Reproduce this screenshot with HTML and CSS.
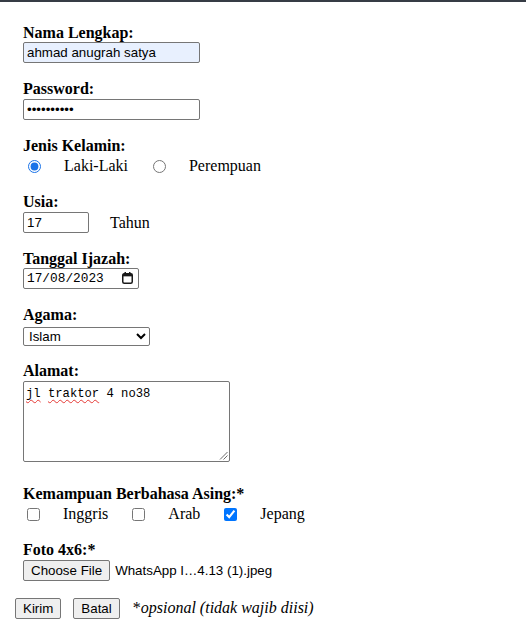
FILE: index.html
```html
<!DOCTYPE html>
<html lang="id">
<head>
<meta charset="utf-8">
<title>Formulir Pendaftaran</title>
<link rel="stylesheet" href="styles.css">
</head>
<body>
<div class="topbar"></div>
<form class="form">
  <div class="field">
    <label class="field-label" for="nama">Nama Lengkap:</label>
    <div class="control-row">
      <input class="text-input name-input" id="nama" type="text" value="ahmad anugrah satya">
    </div>
  </div>

  <div class="field">
    <label class="field-label" for="password">Password:</label>
    <div class="control-row">
      <input class="text-input name-input-plain" id="password" type="password" value="ahmadsatya">
    </div>
  </div>

  <div class="field">
    <span class="field-label">Jenis Kelamin:</span>
    <div class="control-row">
      <label class="opt"><input class="radio" type="radio" name="jk" checked><span>Laki-Laki</span></label>
      <label class="opt"><input class="radio" type="radio" name="jk"><span>Perempuan</span></label>
    </div>
  </div>

  <div class="field">
    <label class="field-label" for="usia">Usia:</label>
    <div class="control-row">
      <input class="text-input age-input" id="usia" type="text" value="17">
      <span class="unit">Tahun</span>
    </div>
  </div>

  <div class="field">
    <span class="field-label">Tanggal Ijazah:</span>
    <div class="control-row">
      <div class="date-input">
        <span class="date-text">17/08/2023</span>
        <svg class="cal-icon" width="11" height="12" viewBox="0 0 11 12" aria-hidden="true">
          <rect x="2.5" y="0" width="1.5" height="2" fill="#1a1a1a"/>
          <rect x="7" y="0" width="1.5" height="2" fill="#1a1a1a"/>
          <rect x="0.75" y="1.75" width="9.5" height="9.5" rx="1.5" fill="none" stroke="#1a1a1a" stroke-width="1.5"/>
          <rect x="0.75" y="1.75" width="9.5" height="2.6" fill="#1a1a1a"/>
        </svg>
      </div>
    </div>
  </div>

  <div class="field">
    <label class="field-label" for="agama">Agama:</label>
    <div class="control-row">
      <select class="select" id="agama">
        <option selected>Islam</option>
        <option>Kristen</option>
        <option>Katolik</option>
        <option>Hindu</option>
        <option>Buddha</option>
        <option>Konghucu</option>
      </select>
    </div>
  </div>

  <div class="field">
    <span class="field-label">Alamat:</span>
    <div class="control-row area-row">
      <div class="textarea" role="textbox" aria-multiline="true"><span class="typo">jl</span> <span class="typo">traktor</span> 4 no38<svg class="grip" width="9" height="9" viewBox="0 0 9 9" aria-hidden="true"><path d="M1 8.5 L8.5 1 M4.5 8.5 L8.5 4.5" stroke="#6b6b6b" stroke-width="1" fill="none"/></svg></div>
    </div>
  </div>

  <div class="field">
    <span class="field-label">Kemampuan Berbahasa Asing:*</span>
    <div class="control-row">
      <label class="opt"><input class="check" type="checkbox"><span>Inggris</span></label>
      <label class="opt"><input class="check" type="checkbox"><span>Arab</span></label>
      <label class="opt"><input class="check" type="checkbox" checked><span>Jepang</span></label>
    </div>
  </div>

  <div class="field">
    <span class="field-label">Foto 4x6:*</span>
    <div class="control-row">
      <button class="btn" type="button">Choose File</button>
      <span class="file-name">WhatsApp I…4.13 (1).jpeg</span>
    </div>
  </div>

  <div class="actions">
    <button class="btn" type="submit">Kirim</button>
    <button class="btn" type="reset">Batal</button>
    <span class="note">*<i>opsional (tidak wajib diisi)</i></span>
  </div>
</form>
</body>
</html>
```

FILE: styles.css
```css
html, body {
  margin: 0;
  padding: 0;
  background: #ffffff;
}

body {
  font-family: "Liberation Serif", "Times New Roman", serif;
  font-size: 16px;
  color: #000000;
}

.topbar {
  height: 2px;
  background: #363c45;
}

.form {
  padding: 22px 0 0 23px;
}

.field {
  display: flex;
  flex-direction: column;
  align-items: flex-start;
  margin-bottom: 16px;
}

.field-label {
  display: block;
  font-weight: bold;
  line-height: 18.4px;
  height: 18.4px;
}

.control-row {
  display: flex;
  align-items: center;
  height: 22px;
}

.control-row.area-row {
  height: 88px;
  align-items: flex-start;
}

.text-input {
  box-sizing: border-box;
  height: 21px;
  margin: 0;
  padding: 1px 3px;
  border: 1px solid #767676;
  border-radius: 2px;
  font-family: "Liberation Sans", Arial, sans-serif;
  font-size: 13.333px;
  color: #000000;
  background: #ffffff;
  align-self: flex-start;
}

.name-input {
  width: 177px;
  background: #e8f0fe;
}

.name-input-plain {
  width: 177px;
}

.age-input {
  width: 66px;
}

.unit {
  margin-left: 21px;
}

.opt {
  display: flex;
  align-items: center;
}

.opt + .opt {
  margin-left: 20px;
}

.radio {
  width: 13px;
  height: 13px;
  margin: 0 23px 0 5px;
  accent-color: #1a73e8;
}

.check {
  width: 13px;
  height: 13px;
  margin: 0 23px 0 4px;
}

.date-input {
  box-sizing: border-box;
  width: 116px;
  height: 21px;
  border: 1px solid #767676;
  border-radius: 2px;
  display: flex;
  align-items: center;
  justify-content: space-between;
  padding: 0 5px 0 3px;
  align-self: flex-start;
}

.date-text {
  font-family: "Liberation Mono", "DejaVu Sans Mono", monospace;
  font-size: 12.8px;
  color: #000000;
}

.cal-icon {
  display: block;
  margin-top: -1px;
}

.select {
  box-sizing: border-box;
  width: 127px;
  height: 19px;
  margin: 3px 0 0 0;
  padding: 0 0 0 1px;
  border: 1px solid #767676;
  border-radius: 2px;
  font-family: "Liberation Sans", Arial, sans-serif;
  font-size: 13.333px;
  color: #000000;
  background: #ffffff;
  align-self: flex-start;
}

.textarea {
  position: relative;
  box-sizing: border-box;
  width: 207px;
  height: 81px;
  padding: 5px 2px;
  border: 1px solid #767676;
  border-radius: 2px;
  font-family: "Liberation Mono", "DejaVu Sans Mono", monospace;
  font-size: 12.2px;
  line-height: 14px;
  white-space: pre;
}

.typo {
  text-decoration: underline wavy #e53935;
  text-decoration-thickness: 1px;
  text-decoration-skip-ink: none;
  text-underline-offset: 2px;
}

.grip {
  position: absolute;
  right: 1px;
  bottom: 1px;
}

.btn {
  box-sizing: border-box;
  height: 21px;
  margin: 0;
  padding: 1px 7px;
  border: 1px solid #767676;
  border-radius: 2px;
  background: #efefef;
  font-family: "Liberation Sans", Arial, sans-serif;
  font-size: 13.333px;
  color: #000000;
  align-self: flex-start;
}

.file-name {
  margin-left: 5px;
  font-family: "Liberation Sans", Arial, sans-serif;
  font-size: 13.333px;
}

.actions {
  display: flex;
  align-items: center;
  margin-left: -8px;
  height: 21px;
}

.actions .btn + .btn {
  margin-left: 12px;
}

.note {
  margin-left: 13px;
}
```
